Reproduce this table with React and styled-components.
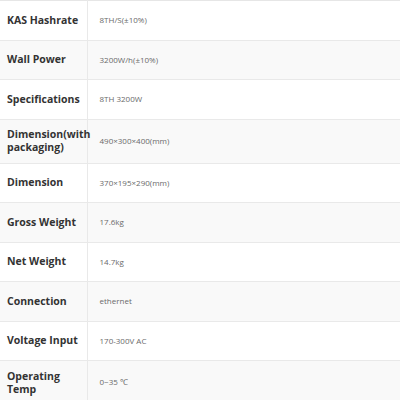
import React from "react";
import styled, { createGlobalStyle } from "styled-components";

const specs = [
  ["KAS Hashrate", "8TH/S(±10%)"],
  ["Wall Power", "3200W/h(±10%)"],
  ["Specifications", "8TH 3200W"],
  ["Dimension(with packaging)", "490×300×400(mm)"],
  ["Dimension", "370×195×290(mm)"],
  ["Gross Weight", "17.6kg"],
  ["Net Weight", "14.7kg"],
  ["Connection", "ethernet"],
  ["Voltage Input", "170-300V AC"],
  ["Operating Temp", "0~35 ℃"],
];

const GlobalStyle = createGlobalStyle`
  body {
    margin: 0;
    background: #fff;
    font-family: "Open Sans", "Liberation Sans", sans-serif;
  }
`;

const Table = styled.table`
  width: 100%;
  table-layout: fixed;
  border-collapse: collapse;
  border-top: 1px solid #e6e6e6;
`;

const LabelCol = styled.col`
  width: 87px;
`;

const Row = styled.tr`
  background: ${(props) => (props.striped ? "#f9f9f9" : "#fff")};
  border-bottom: 1px solid #e9e9e9;
`;

const Label = styled.td`
  padding: 8.5px 3px 8.5px 7px;
  border-right: 1px solid #e9e9e9;
  font-size: 10.5px;
  line-height: 13px;
  font-weight: 700;
  color: #333;
  vertical-align: middle;
`;

const Value = styled.td`
  padding: 12px 12px;
  font-size: 8px;
  line-height: 14.5px;
  color: #6a6a6a;
  vertical-align: middle;
`;

const App = () => {
  return (
    <>
      <GlobalStyle />
      <Table>
        <colgroup>
          <LabelCol />
          <col />
        </colgroup>
        <tbody>
          {specs.map(([label, value], idx) => (
            <Row key={idx} striped={idx % 2 === 1}>
              <Label>{label}</Label>
              <Value>{value}</Value>
            </Row>
          ))}
        </tbody>
      </Table>
    </>
  );
};

export default App;
